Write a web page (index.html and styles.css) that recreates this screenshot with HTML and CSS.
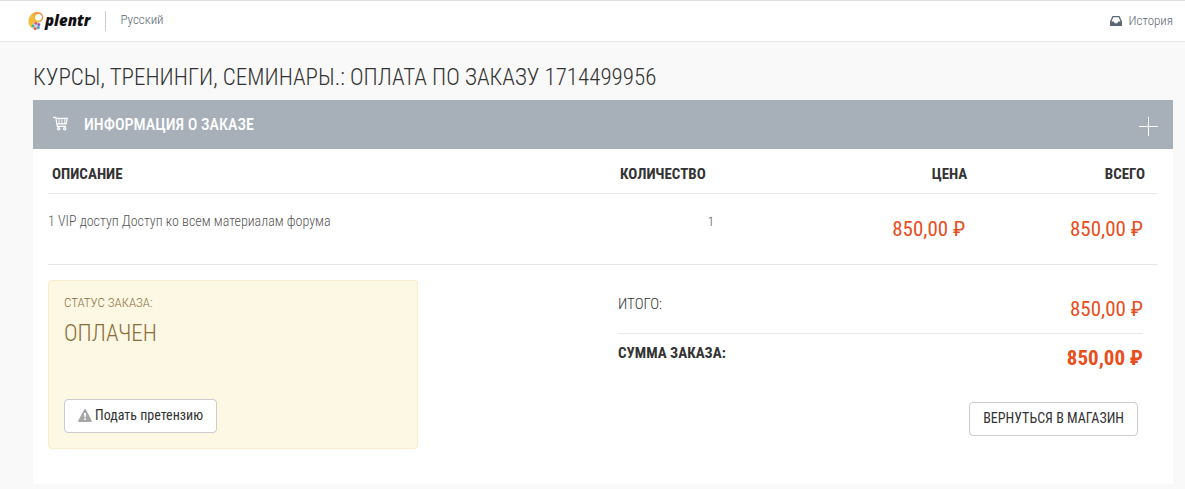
FILE: index.html
```html
<!DOCTYPE html>
<html lang="ru">
<head>
<meta charset="utf-8">
<meta name="viewport" content="width=device-width, initial-scale=1">
<title>Оплата по заказу</title>
<link rel="stylesheet" href="styles.css">
</head>
<body>
<header class="topbar">
  <a class="logo" href="#">
    <svg class="logo-mark" viewBox="0 0 18 20" aria-hidden="true">
      <defs><linearGradient id="gold" x1="0" y1="1" x2="1" y2="0"><stop offset="0" stop-color="#f5c431"/><stop offset=".55" stop-color="#f2b93b"/><stop offset="1" stop-color="#e8703a"/></linearGradient></defs>
      <path fill="url(#gold)" fill-rule="evenodd" d="M9 .5C13 .2 16 2.500 16 6c0 3.500-2.500 5.500-5 5.500L9.500 19C5 19 .5 16 .5 10.500.5 5 4.500.8 9 .5zM11.300 2.300C9 2.300 7.300 4.200 7.500 6.600c.2 2 1.600 3.300 3.300 3.200 2.300-.1 4-1.700 4-4 0-2.100-1.500-3.500-3.500-3.500z"/>
      <circle cx="8.500" cy="15.300" r="4.200" fill="#c9d6e4"/>
      <circle cx="8.300" cy="12.500" r="1.500" fill="#e45a4c"/>
      <circle cx="11.500" cy="13.800" r="1.500" fill="#8a55b8"/>
      <circle cx="11" cy="17" r="1.500" fill="#3f9fd8"/>
      <circle cx="7.600" cy="18" r="1.500" fill="#e8573f"/>
      <circle cx="5.300" cy="15.200" r="1.500" fill="#4bb58a"/>
    </svg>
    <span>plentr</span>
  </a>
  <a class="lang" href="#">Русский</a>
  <a class="history" href="#">
    <svg viewBox="0 0 12 10" aria-hidden="true"><path fill="#5a6773" fill-rule="evenodd" d="M2.500 0h7L12 5.500V10H0V5.500zM3.300 1.300 1.500 5.500h2.300l.9 1.800h2.600l.9-1.800h2.300L8.700 1.300z"/></svg>
    <span>История</span>
  </a>
</header>
<main class="page">
  <h1 class="title">КУРСЫ, ТРЕНИНГИ, СЕМИНАРЫ.: ОПЛАТА ПО ЗАКАЗУ 1714499956</h1>
  <section class="panel">
    <div class="panel-head">
      <svg class="cart" viewBox="0 0 16 16" fill="none" stroke="#fff" aria-hidden="true"><path stroke-width="1.300" d="M0 1.500h3l1.600 9.500h9.400M3.200 2.500h12L14 8.500H4.600"/><path d="M6.500 2.500v6M9.500 2.500v6M12.500 2.500v6"/><circle cx="6" cy="13.500" r="1.200" stroke-width="1.300"/><circle cx="12.500" cy="13.500" r="1.200" stroke-width="1.300"/></svg>
      <h2>ИНФОРМАЦИЯ О ЗАКАЗЕ</h2>
      <button class="expand" type="button" aria-label="Развернуть"><svg viewBox="0 0 19 19" aria-hidden="true"><path d="M9.500 0v19M0 9.500h19" stroke="#fff"/></svg></button>
    </div>
    <div class="panel-body">
      <table class="items">
        <thead><tr><th class="desc">ОПИСАНИЕ</th><th class="qty">КОЛИЧЕСТВО</th><th class="price">ЦЕНА</th><th class="total">ВСЕГО</th></tr></thead>
        <tbody><tr><td class="desc">1 VIP доступ Доступ ко всем материалам форума</td><td class="qty">1</td><td class="price">850,00 ₽</td><td class="total">850,00 ₽</td></tr></tbody>
      </table>
      <div class="bottom">
        <div class="status">
          <p class="status-label">СТАТУС ЗАКАЗА:</p>
          <p class="status-value">ОПЛАЧЕН</p>
          <button class="btn" type="button"><svg viewBox="0 0 14 13" aria-hidden="true"><path fill="#a6a6a6" d="M7 0c.5 0 .8.3 1 .7l5.800 11c.3.600-.1 1.300-.8 1.300H1c-.7 0-1.100-.7-.8-1.300L6 .7C6.200.3 6.500 0 7 0z"/><path fill="#fff" d="M6 4h2l-.3 4.300H6.300zM6.200 9.300h1.600v1.600H6.200z"/></svg><span>Подать претензию</span></button>
        </div>
        <div class="summary">
          <div class="line"><span>ИТОГО:</span><span class="sum">850,00 ₽</span></div>
          <div class="line grand"><span>СУММА ЗАКАЗА:</span><span class="sum">850,00 ₽</span></div>
          <button class="btn back" type="button">ВЕРНУТЬСЯ В МАГАЗИН</button>
        </div>
      </div>
    </div>
  </section>
</main>
</body>
</html>
```
FILE: styles.css
```css
* { box-sizing: border-box; }
body {
  margin: 0;
  background: #f9f9f9;
  color: #333;
  font: 300 15px/20px "Roboto Condensed", Roboto, sans-serif;
}
h1, h2, p { margin: 0; }
a { text-decoration: none; color: #5a6570; }

.topbar {
  display: flex;
  align-items: center;
  height: 42px;
  padding: 0 12px 0 28px;
  background: #fff;
  border-top: 1px solid #ddd;
  border-bottom: 1px solid #e7e7e7;
}
.logo {
  display: flex;
  align-items: center;
  color: #111;
  font: italic 800 15px/20px "Open Sans", sans-serif;
}
.logo-mark { width: 17px; height: 20px; }
.logo span { padding-bottom: 2px; }
.lang {
  margin-left: 15px;
  padding: 0 0 2px 14px;
  border-left: 1px solid #ccc;
  font-size: 13px;
  line-height: 18px;
}
.history {
  display: flex;
  align-items: center;
  gap: 7px;
  margin-left: auto;
  font-size: 13px;
}
.history svg { width: 12px; height: 10px; }

.page { padding: 20px 12px 5px 33px; }
.title {
  padding: 1px 0 7px;
  font-size: 23px;
  line-height: 30px;
  font-weight: 300;
}
.panel { background: #fff; }
.panel-head {
  display: flex;
  align-items: center;
  height: 49px;
  padding: 0 15px 0 20px;
  background: #a7afb9;
  color: #fff;
}
.cart { width: 15px; height: 15px; margin-bottom: 2px; }
.panel-head h2 {
  margin-left: 16px;
  font-size: 16px;
  font-weight: 500;
}
.expand {
  margin-left: auto;
  padding: 4px 0 0;
  border: 0;
  background: none;
}
.expand svg { display: block; width: 19px; height: 19px; }
.panel-body { padding: 5px 15px 35px; }

.items {
  width: 100%;
  border-collapse: separate;
  border-spacing: 0;
  table-layout: fixed;
}
.items th, .items td {
  border-bottom: 1px solid #e7e7e7;
  text-align: right;
}
.items th {
  height: 40px;
  padding: 0 13px 0 4px;
  font-weight: 700;
}
.items td {
  height: 71px;
  padding: 17px 15px 0 0;
  vertical-align: top;
  color: #555;
}
.items .desc { width: 51%; text-align: left; }
.items td.desc { font-size: 14px; }
.items .qty { width: 9%; padding-right: 0; }
.items th.qty { text-align: left; padding-left: 6px; }
.items td.qty { padding-top: 18px; font-size: 13px; }
.items .price { width: 23%; padding-right: 4px; }
.items th.price { padding-right: 2px; }
.items .total { width: 17%; }
.items td.price, .items td.total { padding-top: 22px; }
.items td.price, .items td.total, .sum {
  color: #e84e1b;
  font-size: 21px;
  line-height: 26px;
}
.items td.price, .items td.total { font-weight: 400; }

.bottom {
  display: grid;
  grid-template-columns: 1fr 2fr;
  align-items: start;
  padding-top: 15px;
}
.status {
  padding: 12px 15px 15px;
  border: 1px solid #faebcc;
  border-radius: 4px;
  background: #fcf8e3;
  color: #8a6d3b;
}
.status-label { font-size: 13px; }
.status-value { padding: 4px 0 48px; font-size: 23px; line-height: 34px; }
.btn {
  display: flex;
  align-items: center;
  gap: 3px;
  height: 34px;
  padding: 0 13px 2px;
  border: 1px solid #ccc;
  border-radius: 4px;
  background: #fff;
  color: #333;
  font: 400 14px/20px "Roboto Condensed", Roboto, sans-serif;
}
.btn svg { width: 14px; height: 13px; }
.summary {
  display: flex;
  flex-direction: column;
  margin: 0 15px 0 200px;
}
.line {
  display: flex;
  justify-content: space-between;
  padding: 14px 0 10px;
}
.line .sum { padding-top: 2px; font-weight: 400; }
.line:first-child { height: 54px; border-bottom: 1px solid #e7e7e7; }
.line.grand { height: 68px; padding-top: 9px; }
.line.grand, .line.grand .sum { font-weight: 700; }
.back { align-self: flex-end; margin-right: 5px; }
```
